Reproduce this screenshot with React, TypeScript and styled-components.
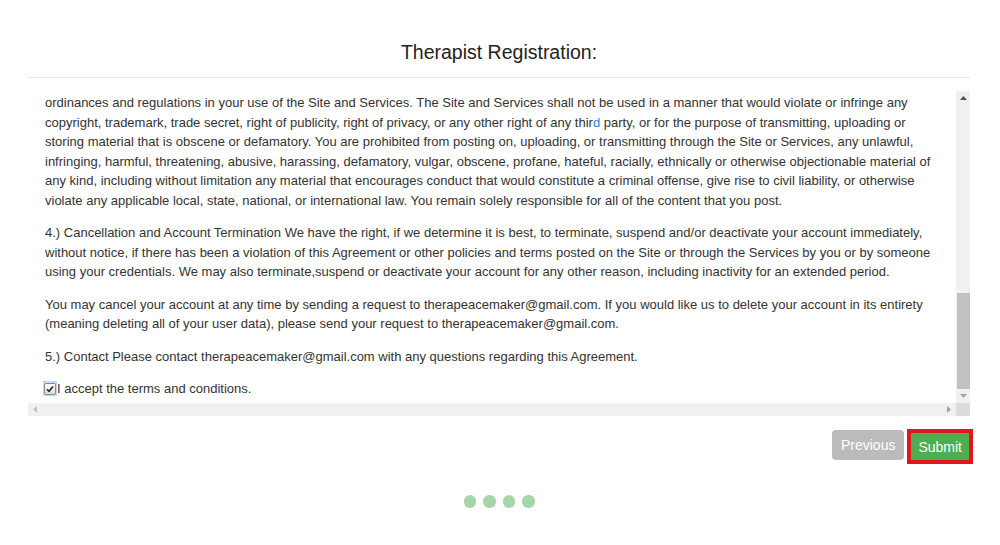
import React, { useLayoutEffect, useRef, useState } from "react";
import styled, { createGlobalStyle } from "styled-components";

const GlobalStyle = createGlobalStyle`
  body {
    margin: 0;
    background: #ffffff;
    color: #333333;
    font-family: "Liberation Sans", Arial, sans-serif;
  }
`;

const Page = styled.div`
  width: 942px;
  margin: 0 0 0 28px;
`;

const Header = styled.div`
  padding: 41px 0 14px;
  border-bottom: 1px solid #e8e8e8;
  text-align: center;
`;

const Title = styled.h2`
  margin: 0;
  font-size: 19.5px;
  line-height: 22px;
  font-weight: normal;
  color: #222222;
`;

// scroll frame: viewport + drawn scrollbars
const Frame = styled.div`
  margin-top: 13px;
  height: 325px;
  display: grid;
  grid-template-columns: 1fr 14px;
  grid-template-rows: 1fr 13px;
`;

const Viewport = styled.div`
  overflow: hidden;
  min-height: 0;
`;

const VBar = styled.div`
  display: flex;
  flex-direction: column;
  background: #f1f1f1;
`;

const HBar = styled.div`
  display: flex;
  background: #f1f1f1;
`;

const Corner = styled.div`
  background: #dcdcdc;
`;

const ArrowButton = styled.div<{ $horizontal?: boolean }>`
  flex: none;
  display: flex;
  align-items: center;
  justify-content: center;
  width: ${({ $horizontal }) => ($horizontal ? "14px" : "auto")};
  height: ${({ $horizontal }) => ($horizontal ? "auto" : "14px")};
`;

const Track = styled.div`
  flex: 1;
  position: relative;
`;

const Thumb = styled.div`
  position: absolute;
  left: 1px;
  right: 0;
  background: #c1c1c1;
`;

const Content = styled.div`
  padding: 12px 15px 4px 17px;
  font-size: 13px;
  line-height: 19.5px;
`;

const Para = styled.p`
  margin: 0 0 13px;
  white-space: nowrap;
`;

const Caret = styled.span`
  color: #1e88e5;
`;

const Accept = styled.label`
  display: flex;
  align-items: center;
  line-height: 19.5px;
  white-space: nowrap;
`;

const CheckHighlight = styled.span`
  display: inline-flex;
  align-items: center;
  justify-content: center;
  width: 14px;
  height: 15px;
  margin-left: -2px;
  background: #c3d9f3;
`;

const CheckBox = styled.span`
  display: flex;
  align-items: center;
  justify-content: center;
  width: 10px;
  height: 10px;
  border: 1px solid #8a8a8a;
  border-radius: 2px;
  background: linear-gradient(#ffffff, #dddddd);
`;

const Actions = styled.div`
  display: flex;
  justify-content: flex-end;
  align-items: flex-start;
  gap: 3px;
  margin: 13px -3px 0 0;
`;

const Button = styled.button<{ $variant: "muted" | "submit" }>`
  font-family: "Liberation Sans", Arial, sans-serif;
  font-size: 14px;
  color: #ffffff;
  cursor: pointer;
  box-sizing: border-box;
  ${({ $variant }) =>
    $variant === "muted"
      ? `
    margin-top: 1px;
    height: 30px;
    padding: 0 9px;
    border: none;
    border-radius: 4px;
    background: #bbbbbb;
  `
      : `
    height: 35px;
    padding: 0 7px;
    border: 4px solid #e3151d;
    border-radius: 0;
    background: #4cae50;
  `}
`;

const Steps = styled.div`
  display: flex;
  justify-content: center;
  gap: 7px;
  margin-top: 31px;
`;

const Dot = styled.span`
  width: 12.5px;
  height: 12.5px;
  border-radius: 50%;
  background: #a5d6a7;
`;

const earlier: string[][] = [
  [
    "Welcome to Therapeacemaker. These Terms and Conditions (the \"Agreement\") govern your access to and use of the Therapeacemaker website (the \"Site\")",
    "and all related services (the \"Services\"). By registering as a therapist, you agree to be bound by this Agreement. If you do not agree to all of the terms",
    "of this Agreement, you may not access the Site or use the Services.",
  ],
  [
    "1.) Eligibility You must be at least 18 years of age and hold a valid license to practice in your state or jurisdiction in order to register as a therapist",
    "on the Site. By registering, you represent and warrant that all information you provide is true, accurate and complete, and that you will keep your",
    "information up to date at all times.",
  ],
  [
    "2.) Account Registration In order to use the Services, you must create an account. You are responsible for maintaining the confidentiality of your",
    "username and password and for all activities that occur under your account. You agree to notify us immediately of any unauthorized use of your",
    "account or any other breach of security. We will not be liable for any loss or damage arising from your failure to protect your account information.",
    "You may not transfer your account to any other person or use the account of another user without permission.",
  ],
  [
    "We reserve the right to refuse registration of, or to cancel, any account at our sole discretion. We may also modify, suspend or discontinue any part",
    "of the Site or Services at any time, with or without notice, and we will not be liable to you or to any third party for any such modification, suspension",
    "or discontinuance.",
  ],
  [
    "Information you provide in your profile, including your name, credentials, areas of practice and contact details, may be displayed publicly on the",
    "Site so that clients can find you. You are responsible for making sure that your profile is accurate and that it does not mislead clients in any way.",
    "We may review, edit or remove profile content that we believe does not meet these requirements, but we have no obligation to do so, and we are",
    "not responsible for any content posted by therapists or other users.",
  ],
  [
    "All content on the Site that is provided by us, including text, graphics, logos and software, is our property or the property of our licensors and is",
    "protected by copyright and other intellectual property laws. You may not copy, reproduce, distribute or create derivative works from such content",
    "without our prior written permission, except as allowed by this Agreement or by applicable law.",
  ],
  [
    "The Site is a directory that helps clients find therapists. We do not provide therapy or medical advice, and we do not endorse or recommend any",
    "therapist listed on the Site. Any relationship between you and a client is solely between you and that client, and you are responsible for meeting",
    "all professional, ethical and legal obligations that apply to your practice.",
  ],
];

const conductHead: string[] = [
  "3.) User Conduct You are solely responsible for all information, text, images and other content that you post, upload or otherwise make available",
  "through the Site or Services. You agree that you will not use the Site or Services for any purpose that is unlawful or prohibited by this Agreement.",
  "You agree that you will not interfere with the proper working of the Site, and you agree to comply with all applicable federal, state and local laws, rules,",
];

const conductTail: React.ReactNode[] = [
  "ordinances and regulations in your use of the Site and Services. The Site and Services shall not be used in a manner that would violate or infringe any",
  <>
    copyright, trademark, trade secret, right of publicity, right of privacy, or any other right of any thir<Caret>d</Caret> party, or for the purpose of
    transmitting, uploading or
  </>,
  "storing material that is obscene or defamatory. You are prohibited from posting on, uploading, or transmitting through the Site or Services, any unlawful,",
  "infringing, harmful, threatening, abusive, harassing, defamatory, vulgar, obscene, profane, hateful, racially, ethnically or otherwise objectionable material of",
  "any kind, including without limitation any material that encourages conduct that would constitute a criminal offense, give rise to civil liability, or otherwise",
  "violate any applicable local, state, national, or international law. You remain solely responsible for all of the content that you post.",
];

const later: string[][] = [
  [
    "4.) Cancellation and Account Termination We have the right, if we determine it is best, to terminate, suspend and/or deactivate your account immediately,",
    "without notice, if there has been a violation of this Agreement or other policies and terms posted on the Site or through the Services by you or by someone",
    "using your credentials. We may also terminate,suspend or deactivate your account for any other reason, including inactivity for an extended period.",
  ],
  [
    "You may cancel your account at any time by sending a request to therapeacemaker@gmail.com. If you would like us to delete your account in its entirety",
    "(meaning deleting all of your user data), please send your request to therapeacemaker@gmail.com.",
  ],
  ["5.) Contact Please contact therapeacemaker@gmail.com with any questions regarding this Agreement."],
];

const Lines: React.FC<{ lines: React.ReactNode[] }> = ({ lines }) => (
  <>
    {lines.map((line, i) => (
      <React.Fragment key={i}>
        {i > 0 && <br />}
        {line}
      </React.Fragment>
    ))}
  </>
);

type Dir = "up" | "down" | "left" | "right";

const Arrow: React.FC<{ dir: Dir; color: string }> = ({ dir, color }) => {
  const points: Record<Dir, string> = {
    up: "0,4 3.5,0 7,4",
    down: "0,0 3.5,4 7,0",
    left: "4,0 0,3.5 4,7",
    right: "0,0 4,3.5 0,7",
  };
  const vertical = dir === "up" || dir === "down";
  return (
    <svg width={vertical ? 7 : 4} height={vertical ? 4 : 7} viewBox={vertical ? "0 0 7 4" : "0 0 4 7"}>
      <polygon points={points[dir]} fill={color} />
    </svg>
  );
};

const App: React.FC = () => {
  const viewRef = useRef<HTMLDivElement>(null);
  const trackRef = useRef<HTMLDivElement>(null);
  const [thumb, setThumb] = useState({ top: 0, height: 0 });

  useLayoutEffect(() => {
    const el = viewRef.current;
    const track = trackRef.current;
    if (!el || !track) return;
    el.scrollTop = el.scrollHeight;
    const len = track.clientHeight;
    const height = Math.round((el.clientHeight / el.scrollHeight) * len);
    const top = Math.round((el.scrollTop / el.scrollHeight) * len);
    setThumb({ top, height });
  }, []);

  return (
    <>
      <GlobalStyle />
      <Page>
        <Header>
          <Title>Therapist Registration:</Title>
        </Header>
        <Frame>
          <Viewport ref={viewRef}>
            <Content>
              {earlier.map((p, i) => (
                <Para key={i}>
                  <Lines lines={p} />
                </Para>
              ))}
              <Para>
                <Lines lines={[...conductHead, ...conductTail]} />
              </Para>
              {later.map((p, i) => (
                <Para key={i}>
                  <Lines lines={p} />
                </Para>
              ))}
              <Accept>
                <CheckHighlight>
                  <CheckBox>
                    <svg width="8" height="8" viewBox="0 0 8 8">
                      <path d="M1 4.2 L3 6.2 L7 1.4" fill="none" stroke="#222" strokeWidth="1.6" />
                    </svg>
                  </CheckBox>
                </CheckHighlight>
                I accept the terms and conditions.
              </Accept>
            </Content>
          </Viewport>
          <VBar>
            <ArrowButton>
              <Arrow dir="up" color="#505050" />
            </ArrowButton>
            <Track ref={trackRef}>
              <Thumb style={{ top: thumb.top, height: thumb.height }} />
            </Track>
            <ArrowButton>
              <Arrow dir="down" color="#a3a3a3" />
            </ArrowButton>
          </VBar>
          <HBar>
            <ArrowButton $horizontal>
              <Arrow dir="left" color="#c4c4c4" />
            </ArrowButton>
            <Track />
            <ArrowButton $horizontal>
              <Arrow dir="right" color="#a3a3a3" />
            </ArrowButton>
          </HBar>
          <Corner />
        </Frame>
        <Actions>
          <Button $variant="muted">Previous</Button>
          <Button $variant="submit">Submit</Button>
        </Actions>
        <Steps>
          <Dot />
          <Dot />
          <Dot />
          <Dot />
        </Steps>
      </Page>
    </>
  );
};

export default App;
